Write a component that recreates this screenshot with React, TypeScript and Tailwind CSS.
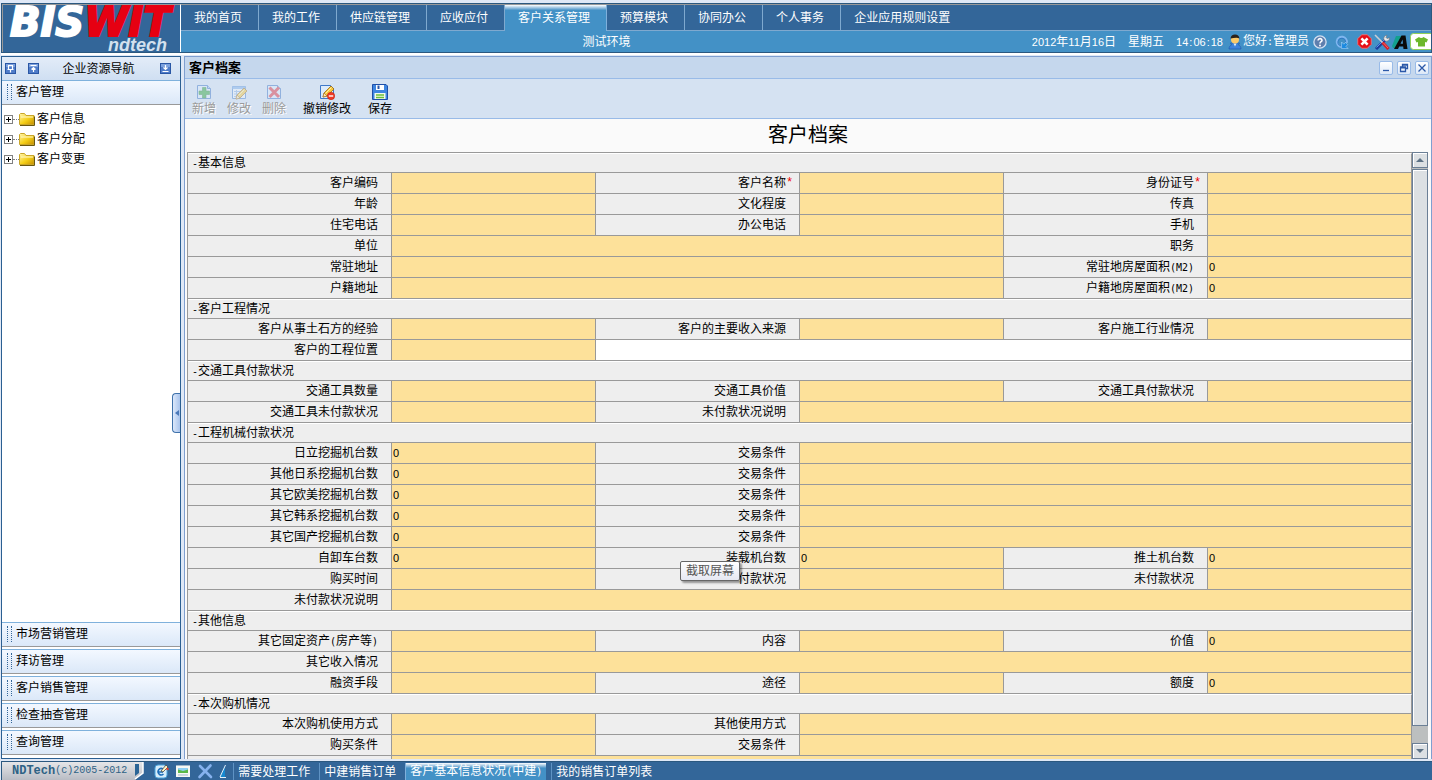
import { Fragment } from "react";
import type { ReactNode } from "react";

const mainTabs = [
  "我的首页",
  "我的工作",
  "供应链管理",
  "应收应付",
  "客户关系管理",
  "预算模块",
  "协同办公",
  "个人事务",
  "企业应用规则设置",
];

const treeItems = ["客户信息", "客户分配", "客户变更"];
const modules = ["市场营销管理", "拜访管理", "客户销售管理", "检查抽查管理", "查询管理"];
const openPages = ["需要处理工作", "中建销售订单", "客户基本信息状况(中建)", "我的销售订单列表"];

type Field = {
  label: string;
  value?: string;
  required?: boolean;
  span?: 1 | 3 | 5;
  blankAfter?: boolean;
  tip?: string;
};

const sections: { title: string; fields: Field[] }[] = [
  {
    title: "基本信息",
    fields: [
      { label: "客户编码" },
      { label: "客户名称", required: true },
      { label: "身份证号", required: true },
      { label: "年龄" },
      { label: "文化程度" },
      { label: "传真" },
      { label: "住宅电话" },
      { label: "办公电话" },
      { label: "手机" },
      { label: "单位", span: 3 },
      { label: "职务" },
      { label: "常驻地址", span: 3 },
      { label: "常驻地房屋面积(M2)", value: "0" },
      { label: "户籍地址", span: 3 },
      { label: "户籍地房屋面积(M2)", value: "0" },
    ],
  },
  {
    title: "客户工程情况",
    fields: [
      { label: "客户从事土石方的经验" },
      { label: "客户的主要收入来源" },
      { label: "客户施工行业情况" },
      { label: "客户的工程位置", blankAfter: true },
    ],
  },
  {
    title: "交通工具付款状况",
    fields: [
      { label: "交通工具数量" },
      { label: "交通工具价值" },
      { label: "交通工具付款状况" },
      { label: "交通工具未付款状况" },
      { label: "未付款状况说明", span: 3 },
    ],
  },
  {
    title: "工程机械付款状况",
    fields: [
      { label: "日立挖掘机台数", value: "0" },
      { label: "交易条件", span: 3 },
      { label: "其他日系挖掘机台数", value: "0" },
      { label: "交易条件", span: 3 },
      { label: "其它欧美挖掘机台数", value: "0" },
      { label: "交易条件", span: 3 },
      { label: "其它韩系挖掘机台数", value: "0" },
      { label: "交易条件", span: 3 },
      { label: "其它国产挖掘机台数", value: "0" },
      { label: "交易条件", span: 3 },
      { label: "自卸车台数", value: "0" },
      { label: "装载机台数", value: "0" },
      { label: "推土机台数", value: "0" },
      { label: "购买时间" },
      { label: "付款状况", tip: "截取屏幕" },
      { label: "未付款状况" },
      { label: "未付款状况说明", span: 5 },
    ],
  },
  {
    title: "其他信息",
    fields: [
      { label: "其它固定资产(房产等)" },
      { label: "内容" },
      { label: "价值", value: "0" },
      { label: "其它收入情况", span: 5 },
      { label: "融资手段" },
      { label: "途径" },
      { label: "额度", value: "0" },
    ],
  },
  {
    title: "本次购机情况",
    fields: [
      { label: "本次购机使用方式" },
      { label: "其他使用方式", span: 3 },
      { label: "购买条件" },
      { label: "交易条件", span: 3 },
    ],
  },
];

const spanClass = { 1: "col-span-1", 3: "col-span-3", 5: "col-span-5" };

// half-width characters take exactly half a CJK cell
function Mixed({ children }: { children: string }) {
  return (
    <>
      {children.split(/([ -~]+)/).map((part, i) =>
        i % 2 ? (
          <span key={i} className="font-['DejaVu_Sans_Mono',monospace] text-[10px]">
            {part}
          </span>
        ) : (
          part
        ),
      )}
    </>
  );
}

function Svg({ size = 16, children }: { size?: number; children: ReactNode }) {
  return (
    <svg width={size} height={size} viewBox="0 0 16 16" aria-hidden="true" className="shrink-0">
      {children}
    </svg>
  );
}

function Sheet() {
  return (
    <>
      <path d="M1.5 1.5h10l3 3v10h-13z" fill="#dcebfb" stroke="#3f78c8" />
      <path d="M11.5 1.5v3h3" fill="#a9cbf3" stroke="#3f78c8" />
    </>
  );
}

function Pencil() {
  return (
    <g>
      <path d="M4 13l1-4 7-7 3 3-7 7z" fill="#f8c83c" stroke="#9c6a14" strokeWidth="0.8" />
      <path d="M4 13l1-4 3 3z" fill="#fbe9c2" stroke="#9c6a14" strokeWidth="0.6" />
      <path d="M6.5 9.5l6-6" stroke="#fff0a8" />
    </g>
  );
}

const AddIcon = () => (
  <Svg>
    <Sheet />
    <path d="M6.5 3.5H10V7h3.5v3.5H10V14H6.5v-3.5H3V7h3.5z" fill="#2fa53c" stroke="#1f8030" strokeWidth="0.6" />
  </Svg>
);

const EditIcon = () => (
  <Svg>
    <path d="M1.5 2.5h13v12h-13z" fill="#eef5fd" stroke="#4f86cf" />
    <path d="M1.5 2.5h13V5h-13z" fill="#7fb0ea" />
    <path d="M3 7.5h8M3 10h8M3 12.5h8M5.5 6v8" stroke="#8db3e4" />
    <g transform="translate(1 2)">
      <Pencil />
    </g>
  </Svg>
);

const DeleteIcon = () => (
  <Svg>
    <Sheet />
    <path d="M3.5 3.5L13 13M13 3.5L3.5 13" stroke="#e0313c" strokeWidth="3" />
  </Svg>
);

const UndoEditIcon = () => (
  <Svg>
    <Sheet />
    <Pencil />
    <circle cx="12" cy="12" r="3.7" fill="#ee3b28" stroke="#c42414" strokeWidth="0.6" />
    <path d="M9.8 12h4.4" stroke="#fff" strokeWidth="1.4" />
  </Svg>
);

const SaveIcon = () => (
  <Svg>
    <path d="M.5.5H14L15.5 2v13.5H.5z" fill="#3f86e0" stroke="#1f4fa8" />
    <path d="M4 1h8v5H4z" fill="#fff" />
    <path d="M5.5 1.5h2V5h-2z" fill="#2b56a8" />
    <path d="M2.5 9h11v6h-11z" fill="#f4fbe8" />
    <path d="M4 11h8M4 13.5h8" stroke="#6cc13a" strokeWidth="1.5" />
  </Svg>
);

const UserIcon = () => (
  <Svg>
    <path d="M2 15c0-2 1-3.5 2.5-4l-1-2h9l-1 2c1.500.5 2.500 2 2.500 4z" fill="#3b82dc" stroke="#1c56a8" strokeWidth="0.6" />
    <path d="M6.5 9.5h3L8 12.500z" fill="#dcecff" />
    <circle cx="8" cy="5.5" r="4" fill="#fbc96a" />
    <path d="M3.500 4.500C3.800 1.800 5.500.5 8 .5s4.200 1.300 4.500 4C10.500 3 6.500 4 3.500 4.500z" fill="#2b2118" />
  </Svg>
);

const HelpIcon = () => (
  <Svg size={14}>
    <circle cx="8" cy="8" r="7" fill="#5f7fae" stroke="#d3dff0" strokeWidth="1.5" />
    <path d="M5.800 6.300C5.800 3.300 10.400 3.500 10.300 6.200 10.200 7.700 8 7.700 8 9.700" fill="none" stroke="#fff" strokeWidth="1.8" />
    <circle cx="8" cy="12" r="1.1" fill="#fff" />
  </Svg>
);

const RefreshIcon = () => (
  <Svg size={14}>
    <path d="M7 13.500A5.700 5.700 0 1 1 13.400 9" fill="none" stroke="#7fb6ee" strokeWidth="2.6" />
    <path d="M7 12.500A4.500 4.500 0 1 1 12.300 8" fill="none" stroke="#2b74bf" />
    <path d="M7.500 15.500V8l2.500 2.500L12 8.500l2.500 2.500-2 2 2.500 2.500z" fill="#1b8ae0" stroke="#bfe0ff" strokeWidth="0.6" />
  </Svg>
);

const StopIcon = () => (
  <Svg size={15}>
    <path d="M5 .8h6L15.200 5v6L11 15.200H5L.8 11V5z" fill="#e60f18" stroke="#ff7a78" strokeWidth="0.8" />
    <path d="M4.700 4.700l6.600 6.600M11.300 4.700l-6.600 6.600" stroke="#fff" strokeWidth="2.8" />
  </Svg>
);

const ToolsIcon = () => (
  <Svg>
    <path d="M2 15L11.500 5.500" stroke="#1b3f9b" strokeWidth="3" />
    <path d="M2.500 13.500L11 5" stroke="#5b8df0" />
    <path d="M10 6c-.8-2.500.6-4.500 3-4.800L12 3.500l1 1 2.500-.8c.2 2.500-2 4-4 3.300z" fill="#e8eaec" stroke="#6b6f75" strokeWidth="0.6" />
    <path d="M1 1l8 8" stroke="#c9ced4" strokeWidth="1.6" />
    <path d="M8.500 8.500L14.500 15" stroke="#d3202b" strokeWidth="3.2" />
    <path d="M9.500 9l4.500 5" stroke="#ff8a84" strokeWidth="0.7" />
  </Svg>
);

const FontIcon = () => (
  <Svg>
    <path d="M0 12L4 2h5L5 14H1z" fill="#12a08e" />
    <path d="M2 15L9.500 1.500H13.500L15.500 15H11.500L11.200 12.500H7.200L6 15zM8.500 9.800H11L10.600 5.500z" fill="#0a0a0a" fillRule="evenodd" />
  </Svg>
);

const ShirtIcon = () => (
  <svg width="21" height="17" viewBox="0 0 21 17" aria-hidden="true">
    <rect x="0.5" y="0.5" width="24" height="16" rx="3" fill="#fff" stroke="#8fd05a" />
    <path d="M9 4c1 1.400 3.500 1.400 4.500 0L18 6.500 16.500 9.500 15 9v4.500H8V9l-1.500.5L5 6.500z" fill="#6cb82b" />
  </svg>
);

function NavIcon({ d }: { d: string }) {
  return (
    <svg width="11" height="11" viewBox="0 0 11 11" aria-hidden="true">
      <rect x="0.5" y="0.5" width="10" height="10" fill="#4f7cc9" stroke="#2a57a5" />
      <path d="M1 1h9v3H1z" fill="#7da2de" />
      <path d={d} fill="none" stroke="#fff" strokeWidth="1.2" />
    </svg>
  );
}

const FolderIcon = () => (
  <svg width="16" height="13" viewBox="0 0 16 13" aria-hidden="true">
    <defs>
      <linearGradient id="folder" x1="0" y1="0" x2="1" y2="1">
        <stop offset="0" stopColor="#fff6b0" />
        <stop offset="0.55" stopColor="#f5cf18" />
        <stop offset="1" stopColor="#c48d00" />
      </linearGradient>
    </defs>
    <path d="M.5 11.500v-10l1-1h4l1.500 2h8v9z" fill="url(#folder)" stroke="#c9a62a" />
    <path d="M1 12.500h14.500v-9" fill="none" stroke="#6b5810" />
    <path d="M2 4h12" stroke="#fff8c8" />
  </svg>
);

function Logo() {
  return (
    <svg width="177" height="48" viewBox="0 0 177 48" role="img" aria-label="BISWIT ndtech">
      <text
        x="7"
        y="31"
        fontFamily="DejaVu Sans"
        fontWeight="700"
        fontStyle="italic"
        fontSize="40"
        strokeWidth="2"
        fill="#fff"
        stroke="#fff"
      >
        BIS
        <tspan fill="#e60012" stroke="#e60012">
          WIT
        </tspan>
      </text>
      <text x="105" y="46" fontFamily="Liberation Sans" fontWeight="700" fontStyle="italic" fontSize="18" fill="#d3e1ee">
        ndtech
      </text>
    </svg>
  );
}

function Header() {
  return (
    <header className="flex h-[50px] shrink-0 border border-[#2b587f] bg-[#336699] text-white">
      <div className="flex w-[179px] items-start border-t border-r border-l border-[#999999] border-r-white">
        <Logo />
      </div>
      <div className="flex min-w-0 flex-1 flex-col">
        <nav className="flex h-[27px] shrink-0 border-t border-[#999999]">
          {mainTabs.map((tab, i) => (
            <button
              key={tab}
              className={
                tab === "客户关系管理"
                  ? "border-r border-[#7fb0dc] bg-linear-to-b from-white from-0% via-[#4391c6] via-20% to-[#4391c6] pr-4 pl-[13px]"
                  : i === mainTabs.length - 1
                    ? "flex-1 border-b border-[#7fa9cf] pr-4 pl-[13px] text-left"
                    : "border-r border-b border-[#7fa9cf] pr-4 pl-[13px]"
              }
            >
              {tab}
            </button>
          ))}
        </nav>
        <div className="flex flex-1 items-center bg-[#4391c6] whitespace-nowrap">
          <div className="flex-1 text-center">测试环境</div>
          <div className="flex items-center">
            <span className="mr-3">
              <span className="text-[11px]">2012</span>年<span className="text-[11px]">11</span>月
              <span className="text-[11px]">16</span>日
            </span>
            <span className="mr-3">星期五</span>
            <time className="mr-1 text-[11px]">
              14<span className="px-px">:</span>06<span className="px-px">:</span>18
            </time>
            <UserIcon />
            <span>
              <Mixed>您好:管理员</Mixed>
            </span>
            <div className="ml-1 flex items-center gap-0.5">
              <button aria-label="帮助" className="mr-1.5">
                <HelpIcon />
              </button>
              <button aria-label="刷新" className="mr-1.5">
                <RefreshIcon />
              </button>
              <button aria-label="退出">
                <StopIcon />
              </button>
              <button aria-label="设置">
                <ToolsIcon />
              </button>
              <button aria-label="字体">
                <FontIcon />
              </button>
              <button aria-label="皮肤">
                <ShirtIcon />
              </button>
            </div>
          </div>
        </div>
      </div>
    </header>
  );
}

function ModuleBar({ label }: { label: string }) {
  return (
    <button className="flex h-[25px] w-full shrink-0 items-center gap-1 border-t border-b border-t-[#7fb1dc] border-b-[#999999] bg-linear-to-b from-[#f3f8ff] to-[#dbe8f8] pb-0.5 pl-[5px] text-left">
      <span className="flex h-4 w-[5px] justify-between">
        <span className="border-l border-dotted border-[#336699]" />
        <span className="border-l border-dotted border-[#336699]" />
      </span>
      {label}
    </button>
  );
}

function Sidebar() {
  return (
    <aside className="relative flex w-[180px] shrink-0 flex-col border border-[#2b5f92] bg-white">
      <div className="flex h-[23px] shrink-0 items-center bg-linear-to-b from-[#e3ecf8] to-[#cfdff2] px-[3px]">
        <button aria-label="固定">
          <NavIcon d="M3 2.500h5M3.500 3v3M7.500 3v3M2.500 6.500h6M5.500 6.500v3" />
        </button>
        <button aria-label="全部收起" className="ml-3">
          <NavIcon d="M2.500 2.500h6M5.500 9V4.500M3.500 6.500l2-2 2 2" />
        </button>
        <span className="flex-1 pl-1 text-center">企业资源导航</span>
        <button aria-label="全部展开" className="mx-1.5">
          <NavIcon d="M2.500 8.500h6M5.500 2v4.500M3.500 4.500l2 2 2-2" />
        </button>
      </div>
      <ModuleBar label="客户管理" />
      <ul className="flex-1 pt-1 pl-0.5">
        {treeItems.map((item) => (
          <li key={item} className="flex h-5 items-center">
            <button
              aria-label={`展开${item}`}
              className="flex size-[9px] items-center justify-center border border-[#808080] bg-white"
            >
              <svg width="5" height="5" viewBox="0 0 5 5" aria-hidden="true">
                <path d="M0 2.500h5M2.500 0v5" stroke="#000" />
              </svg>
            </button>
            <span className="w-1.5 border-t border-dotted border-[#808080]" />
            <FolderIcon />
            <a href="#" className="ml-0.5 text-black">
              {item}
            </a>
          </li>
        ))}
      </ul>
      <div className="flex flex-col gap-0.5 pb-[3px]">
        {modules.map((m) => (
          <ModuleBar key={m} label={m} />
        ))}
      </div>
      <button
        aria-label="收起导航"
        className="absolute top-[48%] right-0 flex h-10 w-2 items-center justify-center rounded-l-sm border border-r-0 border-[#3f72ab] bg-linear-to-r from-[#dce8fa] to-[#a9c4ec]"
      >
        <svg width="4" height="6" viewBox="0 0 4 6" aria-hidden="true">
          <path d="M4 0v6L0 3z" fill="#4a78b8" />
        </svg>
      </button>
    </aside>
  );
}

function ToolButton({ icon, label, disabled }: { icon: ReactNode; label: string; disabled?: boolean }) {
  return (
    <button
      disabled={disabled}
      className="flex flex-col items-center gap-px text-black disabled:text-[#9a9a9a] disabled:text-shadow-[1px_1px_0_#ffffff]"
    >
      <span className={disabled ? "opacity-45" : ""}>{icon}</span>
      <span className="leading-4">{label}</span>
    </button>
  );
}

function WindowButton({ label, d }: { label: string; d: string }) {
  return (
    <button
      aria-label={label}
      className="flex size-3.5 items-center justify-center rounded-xs border border-[#99bbe8] bg-linear-to-b from-white to-[#dce8f8]"
    >
      <svg width="10" height="10" viewBox="0 0 10 10" aria-hidden="true">
        <path d={d} fill="none" stroke="#2b58a8" strokeWidth="1.3" />
      </svg>
    </button>
  );
}

function FormGrid() {
  return (
    <form className="grid min-w-0 flex-1 auto-rows-min grid-cols-6 border-t border-l border-[#999999]">
      {sections.map((section, s) => (
        <Fragment key={section.title}>
          <h2 className="col-span-6 h-5 border-t border-r border-b border-t-white border-r-[#999999] border-b-[#999999] bg-[#eeeeee] pl-1 leading-[18px]">
            <Mixed>{`-${section.title}`}</Mixed>
          </h2>
          {section.fields.map((field, f) => {
            const id = `field-${s}-${f}`;
            return (
              <Fragment key={id}>
                <div className="relative flex h-[21px] items-center justify-end border-r border-b border-[#999999] bg-[#eeeeee]">
                  <label htmlFor={id}>
                    <Mixed>{field.label}</Mixed>
                  </label>
                  <span className="w-[13px] font-['Liberation_Mono',monospace] text-[#ee0000]">
                    {field.required ? "*" : ""}
                  </span>
                  {field.tip && (
                    <div
                      role="tooltip"
                      className="absolute -top-2 right-[59px] z-10 flex h-5 items-center rounded-xs border border-[#666666] bg-linear-to-b from-white to-[#e6e8f2] px-[5px] text-[#555555] shadow-[2px_2px_2px_#00000060]"
                    >
                      {field.tip}
                    </div>
                  )}
                </div>
                <input
                  id={id}
                  defaultValue={field.value}
                  className={`h-[21px] w-full min-w-0 rounded-none border-r border-b border-[#999999] bg-[#fde19a] pl-px text-[11px] outline-none ${spanClass[field.span ?? 1]}`}
                />
                {field.blankAfter && <div className="col-span-4 border-r border-b border-[#999999] bg-white" />}
              </Fragment>
            );
          })}
        </Fragment>
      ))}
      <div className="h-[21px] border-r border-b border-[#999999] bg-[#eeeeee]" />
      <div className="col-span-5 h-[21px] border-r border-b border-[#999999] bg-[#fde19a]" />
    </form>
  );
}

function ScrollBar() {
  return (
    <div className="flex w-4 shrink-0 flex-col bg-[#bcbfbf]">
      <button
        aria-label="向上滚动"
        className="flex h-4 shrink-0 items-center justify-center border border-[#6b7f95] bg-[#dce0e3] inset-shadow-[1px_1px_0_#ffffff]"
      >
        <svg width="8" height="4" viewBox="0 0 8 4" aria-hidden="true">
          <path d="M4 0l4 4H0z" fill="#5d7285" />
        </svg>
      </button>
      <div className="min-h-0 flex-1 pt-px">
        <div className="h-[97%] border border-[#6b7f95] bg-[#dce0e3] inset-shadow-[1px_1px_0_#ffffff]" />
      </div>
      <button
        aria-label="向下滚动"
        className="flex h-4 shrink-0 items-center justify-center border border-[#6b7f95] bg-[#dce0e3] inset-shadow-[1px_1px_0_#ffffff]"
      >
        <svg width="8" height="4" viewBox="0 0 8 4" aria-hidden="true">
          <path d="M0 0h8L4 4z" fill="#5d7285" />
        </svg>
      </button>
    </div>
  );
}

function CustomerPanel() {
  return (
    <main className="flex min-w-0 flex-1 flex-col border border-b-0 border-[#7f9fd0] bg-[#fafafa]">
      <div className="flex h-[22px] shrink-0 items-center justify-between border-b border-[#99bbe8] bg-[#c5d7ed] pr-0.5 pl-1">
        <h1 className="text-[13px] font-bold">客户档案</h1>
        <div className="flex gap-1">
          <WindowButton label="最小化" d="M2 7.500h6" />
          <WindowButton label="还原" d="M3.500 3.500v-2h5v4h-2M1.500 4h5v4.500h-5zM1.500 4.800h5M3.500 2.200h5" />
          <WindowButton label="关闭" d="M1.500 1.500l7 7M8.500 1.500l-7 7" />
        </div>
      </div>
      <div className="flex h-10 shrink-0 items-center gap-[17px] border-b border-[#99bbe8] bg-[#d5e2f2] pt-1 pl-[7px]">
        <div className="flex gap-[11px]">
          <ToolButton icon={<AddIcon />} label="新增" disabled />
          <ToolButton icon={<EditIcon />} label="修改" disabled />
          <ToolButton icon={<DeleteIcon />} label="删除" disabled />
        </div>
        <ToolButton icon={<UndoEditIcon />} label="撤销修改" />
        <ToolButton icon={<SaveIcon />} label="保存" />
      </div>
      <div className="shrink-0 py-0.5 text-center text-xl leading-[29px]">客户档案</div>
      <div className="flex min-h-0 flex-1 overflow-hidden pr-[3px] pl-0.5">
        <FormGrid />
        <ScrollBar />
      </div>
    </main>
  );
}

function Footer() {
  return (
    <footer className="flex h-[19px] shrink-0 items-stretch border-t border-l border-[#2b587f] bg-[#336699] text-white">
      <div className="flex items-center bg-linear-to-b from-[#e6e6e8] to-[#b9bcc4] pl-2.5 font-['Liberation_Mono',monospace] text-[10px] text-[#2e6285]">
        <b className="text-xs">NDTech</b>
        (c)2005-2012
        <svg width="18" height="18" viewBox="0 0 18 18" aria-hidden="true" className="ml-0.5">
          <path d="M6 2h4v9l-4 3z" fill="#2b6596" />
          <path d="M18 0v18H6l8-7V0z" fill="#336699" />
          <path d="M14 0v11l-8 6" fill="none" stroke="#fff" strokeWidth="1.5" />
        </svg>
      </div>
      <div className="ml-1.5 flex items-center gap-1.5">
        <button aria-label="新建便笺">
          <Svg>
            <rect x="2" y="2" width="12" height="13" rx="3" fill="#d6ecfa" stroke="#4aa3dc" />
            <path d="M10 6a3.200 3.200 0 1 0 .5 5M5 9h5" fill="none" stroke="#1c6cb8" strokeWidth="1.5" />
            <path d="M8 8l5-6 2 2-5 5z" fill="#fff3c4" stroke="#333" strokeWidth="0.7" />
            <circle cx="14.5" cy="6" r="1.2" fill="#e8402c" />
          </Svg>
        </button>
        <button aria-label="桌面">
          <Svg>
            <rect x="1" y="2" width="14" height="12" fill="#f6f8f4" />
            <rect x="3" y="5" width="10" height="5" fill="#59b848" />
            <path d="M3 5h10v1.500L8 8 3 6.500z" fill="#8fd0f5" />
            <path d="M1 2.500h14M3 12h10" stroke="#9fb6c8" />
          </Svg>
        </button>
        <button aria-label="关闭全部">
          <Svg>
            <path d="M3 3l11 11M13.500 2.500L2.500 14" stroke="#86b2ee" strokeWidth="2.6" strokeLinecap="round" />
          </Svg>
        </button>
      </div>
      <svg width="8" height="18" viewBox="0 0 8 18" aria-hidden="true" className="mx-1.5">
        <path d="M1 15L6 4v11z" fill="#1588d0" />
        <path d="M1 15L6.500 3M1 15.500h6" stroke="#e4f1fb" />
      </svg>
      <nav className="flex gap-[5px] pt-px">
        {openPages.map((page, i) => (
          <button
            key={page}
            className={
              i === 2
                ? "border-l border-[#7fb0dc] bg-linear-to-b from-white from-0% via-[#4391c6] via-30% to-[#4391c6] px-1"
                : "border-l border-[#5f93c4] px-1"
            }
          >
            <Mixed>{page}</Mixed>
          </button>
        ))}
      </nav>
    </footer>
  );
}

export default function App() {
  return (
    <div className="flex h-screen flex-col overflow-hidden bg-[#dfe8f6] pt-[3px] pl-px font-['Liberation_Sans','Noto_Sans_CJK_SC',sans-serif] text-xs leading-4 text-black">
      <Header />
      <div className="flex min-h-0 flex-1 gap-[3px] border-t-2 border-white pt-px pb-0.5">
        <Sidebar />
        <CustomerPanel />
      </div>
      <Footer />
    </div>
  );
}
